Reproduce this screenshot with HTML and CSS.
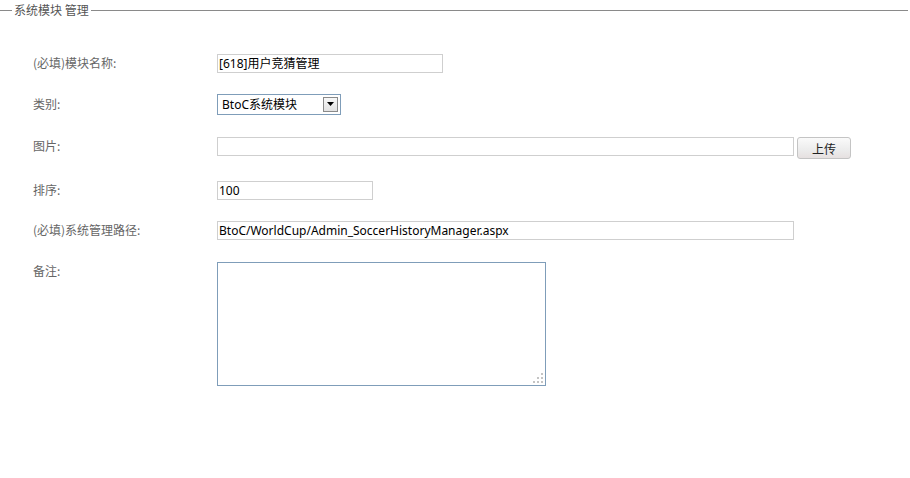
FILE: index.html
```html
<!DOCTYPE html>
<html>
<head>
<meta charset="utf-8">
<link rel="stylesheet" href="styles.css">
</head>
<body>
<fieldset class="panel">
  <legend class="panel-title">系统模块 管理</legend>
  <div class="form">
    <div class="row h40">
      <label class="label">(必填)模块名称:</label>
      <div class="field"><input class="text w226" type="text" value="[618]用户竞猜管理"></div>
    </div>
    <div class="row h42">
      <label class="label">类别:</label>
      <div class="field">
        <div class="select">
          <span class="select-value">BtoC系统模块</span>
          <span class="select-btn"><svg width="7" height="4" viewBox="0 0 7 4"><path d="M0 0h7L3.5 4z" fill="#000"/></svg></span>
        </div>
      </div>
    </div>
    <div class="row h42">
      <label class="label">图片:</label>
      <div class="field"><input class="text w577" type="text" value=""><button class="btn" type="button">上传</button></div>
    </div>
    <div class="row h46">
      <label class="label">排序:</label>
      <div class="field"><input class="text w156" type="text" value="100"></div>
    </div>
    <div class="row h34">
      <label class="label">(必填)系统管理路径:</label>
      <div class="field"><input class="text w577" type="text" value="BtoC/WorldCup/Admin_SoccerHistoryManager.aspx"></div>
    </div>
    <div class="row row-area">
      <label class="label">备注:</label>
      <div class="field">
        <div class="textarea">
          <svg class="grip" width="11" height="11" viewBox="0 0 11 11">
            <rect x="8" y="0" width="2" height="2" fill="#c4c4c4"/>
            <rect x="4" y="4" width="2" height="2" fill="#c4c4c4"/>
            <rect x="8" y="4" width="2" height="2" fill="#c4c4c4"/>
            <rect x="0" y="8" width="2" height="2" fill="#c4c4c4"/>
            <rect x="4" y="8" width="2" height="2" fill="#c4c4c4"/>
            <rect x="8" y="8" width="2" height="2" fill="#c4c4c4"/>
          </svg>
        </div>
      </div>
    </div>
  </div>
</fieldset>
</body>
</html>
```
FILE: styles.css
```css
html, body {
  margin: 0;
  padding: 0;
  background: #fff;
}
body {
  width: 910px;
  height: 478px;
  overflow: hidden;
  font-family: "Noto Sans CJK SC", "DejaVu Sans", sans-serif;
  font-size: 12px;
}
.panel {
  margin: 3px 2px 0 0;
  padding: 0;
  border: 0;
  border-top: 1px solid #8a8a8a;
  min-width: 0;
}
.panel-title {
  margin-left: 12px;
  padding: 0 2px;
  color: #555;
  font-size: 12px;
  line-height: 14px;
}
.form {
  padding: 26px 0 0 33px;
  display: flex;
  flex-direction: column;
}
.row {
  display: grid;
  grid-template-columns: 184px 1fr;
  align-items: center;
}
.h40 { height: 40px; }
.h42 { height: 42px; }
.h46 { height: 46px; }
.h34 { height: 34px; }
.row-area {
  align-items: start;
  padding-top: 15px;
}
.label {
  color: #666;
  font-size: 12px;
  line-height: 16px;
}
.row-area .label {
  margin-top: 1px;
}
.field {
  display: flex;
  align-items: center;
}
.text {
  box-sizing: border-box;
  height: 19px;
  border: 1px solid #cfcfcf;
  padding: 0 1px;
  margin: 0;
  font-family: "Noto Sans", "Noto Sans CJK SC", sans-serif;
  font-size: 12px;
  color: #000;
  background: #fff;
  outline: none;
}
.w226 { width: 226px; }
.w577 { width: 577px; }
.w156 { width: 156px; }
.select {
  box-sizing: border-box;
  width: 124px;
  height: 21px;
  border: 1px solid #7f9db9;
  display: flex;
  align-items: center;
  justify-content: space-between;
  padding: 0 2px 0 4px;
  font-family: "Noto Sans", "Noto Sans CJK SC", sans-serif;
  font-size: 12px;
  color: #000;
}
.select-btn {
  box-sizing: border-box;
  width: 15px;
  height: 15px;
  border: 1px solid #8a8a8a;
  background: linear-gradient(#f8f8f8, #e2e2e2);
  display: flex;
  align-items: center;
  justify-content: center;
}
.btn {
  box-sizing: border-box;
  margin-left: 3px;
  margin-top: 4px;
  width: 54px;
  height: 22px;
  border: 1px solid #c4c4c4;
  border-radius: 3px;
  background: linear-gradient(#fafafa, #ececec 60%, #e6e0e0);
  font-family: "Noto Sans CJK SC", sans-serif;
  font-size: 12px;
  color: #222;
  padding: 0;
}
.textarea {
  box-sizing: border-box;
  width: 329px;
  height: 124px;
  border: 1px solid #7f9db9;
  position: relative;
}
.grip {
  position: absolute;
  right: 1px;
  bottom: 1px;
  display: block;
}
```
